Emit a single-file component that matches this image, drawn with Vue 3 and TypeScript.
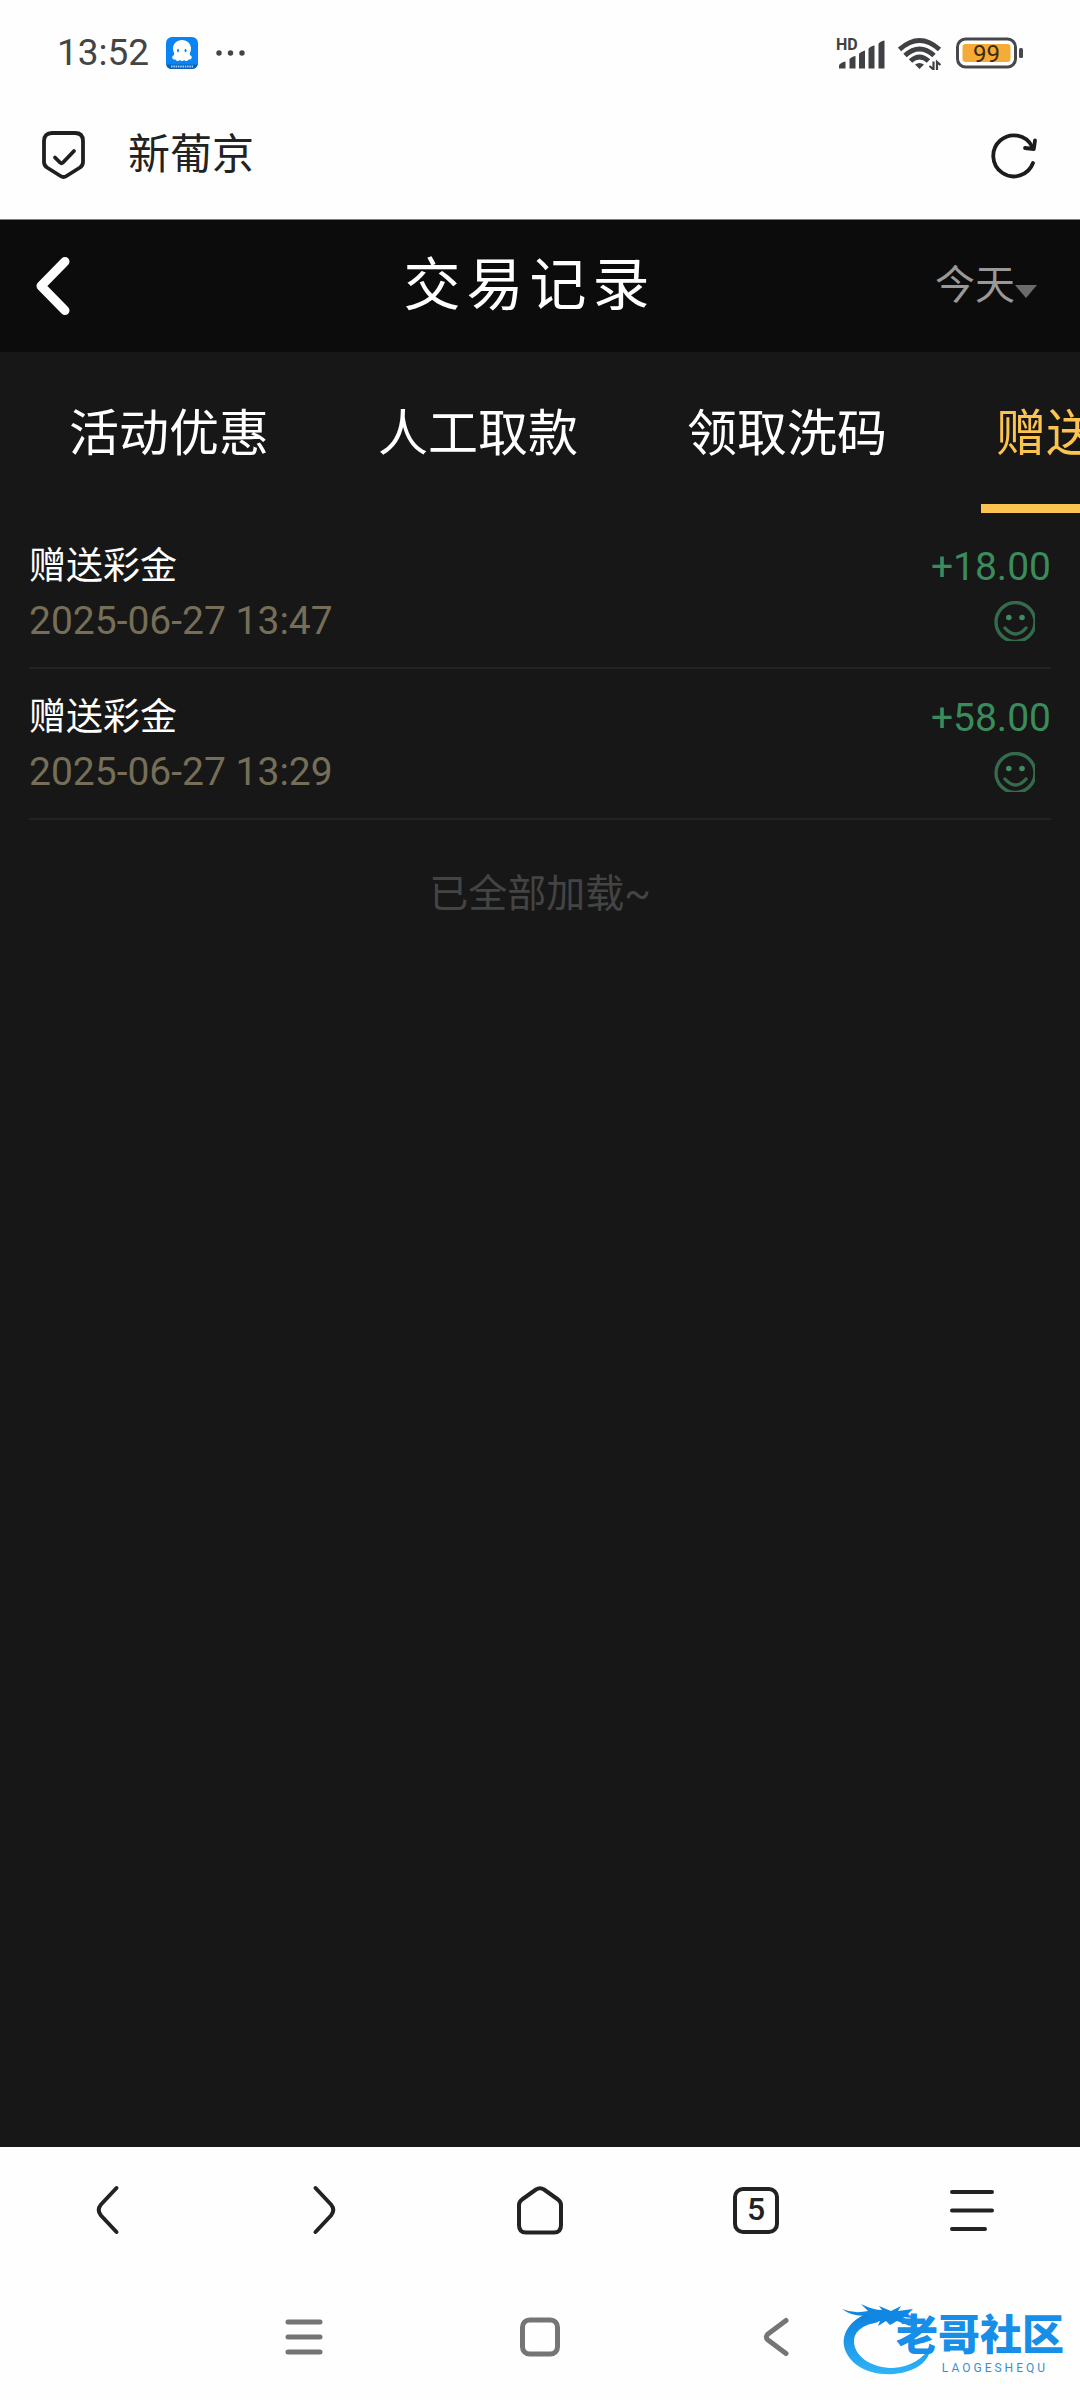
<script setup lang="ts">
import { ref } from 'vue'

interface TradeRecord {
  id: number
  name: string
  time: string
  amount: string
}

const tabs: string[] = ['活动优惠', '人工取款', '领取洗码', '赠送彩金']
const activeTab = ref<number>(3)
const range = ref<string>('今天')

const records: TradeRecord[] = [
  { id: 1, name: '赠送彩金', time: '2025-06-27 13:47', amount: '+18.00' },
  { id: 2, name: '赠送彩金', time: '2025-06-27 13:29', amount: '+58.00' },
]
</script>

<template>
  <div class="screen">
    <header class="status">
      <div class="status-side">
        <span class="clock">13:52</span>
        <svg class="app-icon" width="32" height="32" viewBox="0 0 32 32" aria-hidden="true">
          <rect width="32" height="32" rx="6" fill="#0a84f5" />
          <path d="M0 27.500H32V26a6 6 0 0 1-6 6H6a6 6 0 0 1-6-5Z" fill="#0a62b8" />
          <path d="M16 3c5.200 0 9 3.800 9 8.500 0 3-1.500 4.500-1.200 6 .4 1.300 2 .8 2 2.800 0 1.800-1.700 2.500-3.300 2.200-1 2-3.500 1.800-4.300.6-1.200 1.200-3.200 1.200-4.400 0-1 1.200-3.400 1.400-4.300-.6-1.600.3-3.300-.4-3.300-2.200 0-2 1.600-1.500 2-2.800C8.500 16 7 14.500 7 11.500 7 6.800 10.800 3 16 3Z" fill="#fff" />
          <ellipse cx="12" cy="13.500" rx="1" ry="1.700" fill="#0a84f5" />
          <ellipse cx="19.500" cy="13.500" rx="1" ry="1.700" fill="#0a84f5" />
          <path d="M5 29.500H27" stroke="#a9cdf2" stroke-width="2" stroke-dasharray="1.500 .8" />
        </svg>
        <svg width="30" height="8" viewBox="0 0 30 8" fill="#444" aria-hidden="true">
          <circle cx="3" cy="4" r="2.700" />
          <circle cx="14.500" cy="4" r="2.700" />
          <circle cx="26" cy="4" r="2.700" />
        </svg>
      </div>
      <div class="status-side right">
        <svg width="50" height="34" viewBox="0 0 50 34" fill="#3f4144" aria-hidden="true">
          <text x="0" y="14" class="hd">HD</text>
          <path d="M3 32.500V30Q3 27 9.500 25.500V32.500Z" />
          <path d="M13.500 32.500V23.500Q14.500 21 19.500 20V32.500Z" />
          <path d="M23 32.500V18Q24 16 29 14.500V32.500Z" />
          <path d="M32.500 32.500V13Q33.500 10.500 38.500 9.500V32.500Z" />
          <path d="M42.500 32.500V8Q43.500 5.500 48.500 4.500V32.500Z" />
        </svg>
        <svg width="46" height="34" viewBox="0 0 46 34" aria-hidden="true">
          <g fill="none" stroke="#3f4144" stroke-width="5">
            <path d="M1.500 13.500Q21.500-4.500 41.500 13.500" />
            <path d="M7 19.500Q21.500 6.500 36 19.500" />
            <path d="M12.500 25Q21.500 17 30.500 25" />
          </g>
          <path d="M17 28.500Q21.500 25.500 26 28.500L21.500 33Z" fill="#3f4144" />
          <path d="M35.500 25.500V33.500L31.500 30M39 34V26L42.500 29" fill="none" stroke="#3f4144" stroke-width="2.200" />
        </svg>
        <svg width="68" height="32" viewBox="0 0 68 32" aria-hidden="true">
          <rect x="1.500" y="2" width="58" height="28" rx="8" fill="none" stroke="#46484b" stroke-width="3" />
          <rect x="6.500" y="7" width="48" height="18" rx="3" fill="#f5ab35" />
          <rect x="63" y="11" width="4" height="10" rx="1.500" fill="#46484b" />
          <text x="30.500" y="24.500" text-anchor="middle" class="charge">99</text>
        </svg>
      </div>
    </header>

    <div class="address">
      <svg width="46" height="52" viewBox="0 0 46 52" fill="none" stroke="#1f1f1f" stroke-width="3.800" stroke-linecap="round" stroke-linejoin="round" aria-hidden="true">
        <path d="M11 4H34Q42 4 42 12V33Q42 36.500 39 38.500L25.500 47Q22.500 49 19.500 47L6 38.500Q3 36.500 3 33V12Q3 4 11 4Z" />
        <path d="M14 28.500L19 33.500Q20.500 35 22 33.500L33 22" />
      </svg>
      <span class="site">新葡京</span>
      <button class="plain reload" type="button" aria-label="刷新">
        <svg width="48" height="48" viewBox="0 0 48 48" fill="none" stroke="#1c1c1c" stroke-width="3.800" stroke-linecap="round" stroke-linejoin="round">
          <path d="M43 32A20.500 20.500 0 1 1 42 15.500" />
          <path d="M45 9.500L43.800 18L35 17" />
        </svg>
      </button>
    </div>

    <main class="page">
      <div class="titlebar">
        <button class="plain back" type="button" aria-label="返回">
          <svg width="36" height="60" viewBox="0 0 36 60" fill="none" stroke="#fff" stroke-width="9" stroke-linecap="round" stroke-linejoin="round">
            <path d="M30 5.500L6 30L30 54.500" />
          </svg>
        </button>
        <h1>交易记录</h1>
        <label class="range">
          <select v-model="range" aria-label="日期">
            <option>今天</option>
            <option>昨天</option>
          </select>
          <svg width="22" height="14" viewBox="0 0 22 14" aria-hidden="true"><path d="M0 0H22L11 13Z" fill="#6b6b6b" /></svg>
        </label>
      </div>

      <nav class="tabs">
        <button
          v-for="(tab, i) in tabs"
          :key="tab"
          type="button"
          class="plain tab"
          :class="{ active: i === activeTab }"
          @click="activeTab = i"
        >{{ tab }}</button>
      </nav>

      <ul class="records">
        <li v-for="r in records" :key="r.id" class="record">
          <div class="line">
            <span class="name">{{ r.name }}</span>
            <span class="amount">{{ r.amount }}</span>
          </div>
          <div class="line">
            <time class="time">{{ r.time }}</time>
            <svg class="smile" width="41" height="40" viewBox="0 0 41 40" fill="none" stroke="#356b4d" stroke-width="3.400" stroke-linecap="round" aria-hidden="true">
              <circle cx="21.500" cy="21" r="19.500" />
              <path d="M11 27Q21.500 39 32 27" />
              <circle cx="14.800" cy="16.500" r="2.800" fill="#3f8a60" stroke="none" />
              <circle cx="28" cy="16.500" r="2.800" fill="#3f8a60" stroke="none" />
            </svg>
          </div>
        </li>
      </ul>
      <p class="end">已全部加载~</p>
    </main>

    <footer class="bottom">
      <nav class="toolbar">
        <button class="plain" type="button" aria-label="后退">
          <svg width="48" height="52" viewBox="0 0 48 52" class="ink"><path d="M32.500 4L17 20.500Q12.500 26 17 31.500L32.500 48" /></svg>
        </button>
        <button class="plain" type="button" aria-label="前进">
          <svg width="48" height="52" viewBox="0 0 48 52" class="ink"><path d="M15.500 4L31 20.500Q35.500 26 31 31.500L15.500 48" /></svg>
        </button>
        <button class="plain" type="button" aria-label="主页">
          <svg width="48" height="52" viewBox="0 0 48 52" class="ink"><path d="M20 5.500Q24 3 28 5.500L42 15.500Q45 18 45 21V41Q45 48.500 38 48.500H10Q3 48.500 3 41V21Q3 18 6 15.500Z" /></svg>
        </button>
        <button class="plain" type="button" aria-label="标签页">
          <svg width="48" height="52" viewBox="0 0 48 52" class="ink">
            <rect x="3" y="5" width="42" height="43" rx="8" />
            <text x="24" y="36" text-anchor="middle" class="count">5</text>
          </svg>
        </button>
        <button class="plain" type="button" aria-label="菜单">
          <svg width="48" height="52" viewBox="0 0 48 52" class="ink"><path d="M4 8H44M4 26.500H44M4 45H37" /></svg>
        </button>
      </nav>
      <nav class="system">
        <button class="plain" type="button" aria-label="最近任务">
          <svg width="40" height="40" viewBox="0 0 40 40" class="soft"><path d="M4 5H36M4 20H36M4 35H36" /></svg>
        </button>
        <button class="plain" type="button" aria-label="桌面">
          <svg width="40" height="40" viewBox="0 0 40 40" class="soft"><rect x="2.500" y="3" width="35" height="34" rx="7" /></svg>
        </button>
        <button class="plain" type="button" aria-label="返回上级">
          <svg width="40" height="40" viewBox="0 0 40 40" class="soft"><path d="M30 3.500L12 17Q8.500 20 12 23L30 36.500" /></svg>
        </button>
      </nav>
      <div class="mark">
        <svg width="94" height="76" viewBox="0 0 94 76" aria-hidden="true">
          <defs>
            <linearGradient id="wave" x1="0" y1="0" x2="0" y2="1">
              <stop offset="0" stop-color="#0b7fdd" />
              <stop offset="1" stop-color="#2fb4f7" />
            </linearGradient>
          </defs>
          <path d="M32 12C12 18 2 31 4 46C8 65 30 76 54 74C75 72 90 62 91 46C83 59 70 67 53 68C33 68 16 58 14 43C13 32 22 25 38 22Z" fill="url(#wave)" />
          <path d="M2 9Q14 14 28 11L21 4Q33 10 42 10L39 6L51 11L61 6L58 11L73 9L68 14L73 18L63 17L72 23L70 26L57 21L50 25L46 21L38 26L40 21L31 24L34 19L26 20L30 15Q14 18 2 9Z" fill="#1087e2" />
        </svg>
        <div class="mark-text">
          <span class="mark-name">老哥社区</span>
          <span class="mark-latin">LAOGESHEQU</span>
        </div>
      </div>
    </footer>
  </div>
</template>

<style>
body {
  margin: 0;
  background: #171717;
}
</style>

<style scoped>
.screen {
  display: flex;
  flex-direction: column;
  min-height: 100vh;
  font-family: Roboto, "Noto Sans CJK SC", sans-serif;
  background: #171717;
}
svg {
  display: block;
  flex: none;
}
.plain {
  display: flex;
  align-items: center;
  justify-content: center;
  margin: 0;
  padding: 0;
  border: 0;
  background: none;
  color: inherit;
  font: inherit;
}
.status {
  display: flex;
  justify-content: space-between;
  align-items: center;
  height: 82px;
  padding: 12px 56px 0 57px;
  background: #fefefe;
}
.status-side {
  display: flex;
  align-items: center;
}
.status-side.right {
  gap: 12px;
}
.clock {
  font-size: 37px;
  line-height: 44px;
  color: #444;
}
.app-icon {
  margin: 0 18px 0 17px;
}
.hd {
  font: 700 16px Roboto, sans-serif;
}
.charge {
  font: 400 24px Roboto, sans-serif;
  fill: #3d2a10;
}
.address {
  display: flex;
  align-items: center;
  height: 122px;
  padding: 0 42px 3px 41px;
  border-bottom: 1px solid #808080;
  background: #fefefe;
}
.site {
  margin-left: 41px;
  font-size: 42px;
  line-height: 60px;
  color: #222;
}
.reload {
  margin-left: auto;
}
.page {
  flex: 1;
}
.titlebar {
  display: flex;
  align-items: center;
  height: 132px;
  background: #0c0c0c;
}
.back {
  justify-content: flex-start;
  width: 124px;
  padding-left: 35px;
  box-sizing: border-box;
}
h1 {
  flex: 1;
  margin: 0;
  font-size: 57px;
  font-weight: 400;
  line-height: 84px;
  letter-spacing: 6px;
  text-align: center;
  color: #fff;
}
.range {
  display: flex;
  align-items: center;
  width: 145px;
}
.range select {
  appearance: none;
  width: 80px;
  margin: 0;
  padding: 0;
  border: 0;
  background: none;
  color: #999;
  font: inherit;
  font-size: 40px;
  line-height: 60px;
}
.range svg {
  margin-top: 12px;
}
.tabs {
  display: flex;
  gap: 79px;
  padding-left: 54px;
  overflow: hidden;
}
.tab {
  flex: none;
  height: 161px;
  padding: 2px 15px 0;
  font-size: 50px;
  line-height: 72px;
  color: #fff;
}
.tab.active {
  color: #fdc34f;
  box-shadow: inset 0 -9px #fdc34f;
}
.records {
  margin: 5px 29px 0;
  padding: 0;
  list-style: none;
}
.record {
  padding: 22px 0 19px;
  border-bottom: 2px solid #232323;
}
.line {
  display: flex;
  align-items: center;
  justify-content: space-between;
  height: 54px;
  line-height: 54px;
}
.name {
  font-size: 37px;
  color: #fff;
}
.amount {
  font-size: 39px;
  color: #3a8c5c;
}
.time {
  font-size: 39px;
  color: #766e57;
}
.smile {
  margin-right: 16px;
}
.end {
  margin: 44px 0 0;
  font-size: 39px;
  line-height: 60px;
  text-align: center;
  color: #444;
}
.bottom {
  position: relative;
  background: #fefefe;
}
.toolbar {
  display: grid;
  grid-template-columns: repeat(5, 1fr);
  height: 126px;
}
.system {
  display: flex;
  justify-content: center;
  gap: 196px;
  height: 127px;
}
.ink,
.soft {
  fill: none;
  stroke: #222;
  stroke-width: 4;
  stroke-linecap: round;
  stroke-linejoin: round;
}
.soft {
  stroke: #757575;
  stroke-width: 5;
}
.count {
  font: 500 32px Roboto, sans-serif;
  fill: #222;
  stroke: none;
}
/* community logo laid over the system bar */
.mark {
  position: absolute;
  right: 16px;
  bottom: 24px;
  width: 224px;
}
.mark-text {
  position: absolute;
  right: 0;
  bottom: 0;
  display: flex;
  flex-direction: column;
  align-items: flex-end;
}
.mark-name {
  font-size: 42px;
  font-weight: 900;
  line-height: 48px;
  color: #178ee8;
}
.mark-latin {
  padding-right: 16px;
  font-size: 12px;
  line-height: 16px;
  letter-spacing: 3px;
  color: #3a8fd0;
}
</style>
